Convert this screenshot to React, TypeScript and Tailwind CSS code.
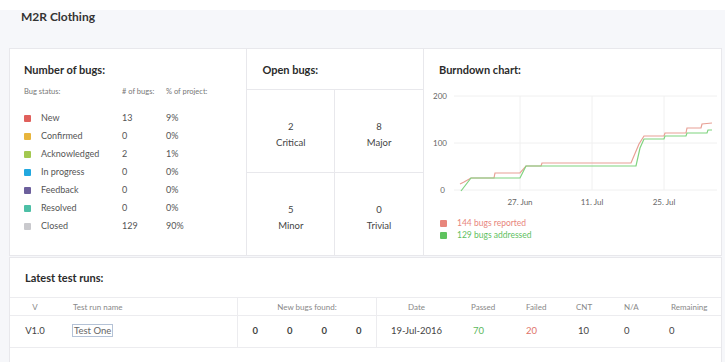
import React from 'react';

const statuses = [
  { name: 'New', color: 'bg-[#e0605c]', count: '13', pct: '9%' },
  { name: 'Confirmed', color: 'bg-[#e8b53c]', count: '0', pct: '0%' },
  { name: 'Acknowledged', color: 'bg-[#a3c850]', count: '2', pct: '1%' },
  { name: 'In progress', color: 'bg-[#22a8df]', count: '0', pct: '0%' },
  { name: 'Feedback', color: 'bg-[#6c5f9c]', count: '0', pct: '0%' },
  { name: 'Resolved', color: 'bg-[#4dbfa6]', count: '0', pct: '0%' },
  { name: 'Closed', color: 'bg-[#c9c9cd]', count: '129', pct: '90%' },
];

const openBugs = [
  { n: '2', label: 'Critical' },
  { n: '8', label: 'Major' },
  { n: '5', label: 'Minor' },
  { n: '0', label: 'Trivial' },
];

const reported =
  '36,98 40,96 47,92 70,92 71,87 96,87 102,80 117,80 118,77 207,77 215,58 220,50 240,50 241,47 262,47 263,42 277,42 278,38 288,37';
const addressed =
  '37,105 47,92 96,92 102,80 212,80 216,62 220,53 240,53 241,50 262,50 263,47 283,47 284,44 288,44';

function Burndown() {
  return (
    <svg width="297" height="125" className="block">
      {[10, 57, 104].map((y) => (
        <line key={y} x1="30" x2="293" y1={y} y2={y} stroke="#f0f0f0" strokeWidth="1" />
      ))}
      {[96, 168, 240].map((x) => (
        <line key={x} x1={x} x2={x} y1="10" y2="104" stroke="#f0f0f0" strokeWidth="1" />
      ))}
      <g fill="#666" fontSize="8" fontFamily="Lato, sans-serif">
        <text x="23" y="13" textAnchor="end">200</text>
        <text x="23" y="60" textAnchor="end">100</text>
        <text x="21" y="107" textAnchor="end">0</text>
        <text x="96" y="119" textAnchor="middle">27. Jun</text>
        <text x="168" y="119" textAnchor="middle">11. Jul</text>
        <text x="240" y="119" textAnchor="middle">25. Jul</text>
      </g>
      <polyline points={reported} fill="none" stroke="#e8a095" strokeWidth="1.2" />
      <polyline points={addressed} fill="none" stroke="#7fd37f" strokeWidth="1.2" />
    </svg>
  );
}

export default function App() {
  return (
    <div className="w-[725px] h-[362px] overflow-hidden bg-[#f6f7fa] font-['Lato',sans-serif] text-[#444]">
      <div className="h-[10px] bg-white" />
      <div className="h-[38px] pl-[21px] pt-[1px] text-[12px] leading-[12px] font-bold text-[#333]">
        M2R Clothing
      </div>

      <div className="ml-[9px] w-[713px] flex bg-white border border-[#e8e8ec] h-[208px]">
        {/* number of bugs */}
        <div className="w-[238px] pt-[15px] px-[14px]">
          <h2 className="text-[11px] leading-[12px] font-bold text-[#2b2b2b]">Number of bugs:</h2>
          <div className="mt-[11px] grid grid-cols-[98px_44px_1fr] text-[7.5px] leading-[10px] text-[#777]">
            <span>Bug status:</span>
            <span># of bugs:</span>
            <span>% of project:</span>
          </div>
          <div className="mt-[12px]">
            {statuses.map((s) => (
              <div key={s.name} className="grid grid-cols-[98px_44px_1fr] h-[18px] items-center text-[9px] text-[#555]">
                <div className="flex items-center">
                  <span className={`w-[7px] h-[7px] rounded-[1px] ${s.color}`} />
                  <span className="ml-[10px]">{s.name}</span>
                </div>
                <span>{s.count}</span>
                <span>{s.pct}</span>
              </div>
            ))}
          </div>
        </div>

        {/* open bugs */}
        <div className="w-[178px] border-l border-[#e8e8ec] flex flex-col">
          <div className="h-[41px] pt-[15px] pl-[15px] border-b border-[#e8e8ec]">
            <h2 className="text-[11px] leading-[12px] font-bold text-[#2b2b2b]">Open bugs:</h2>
          </div>
          <div className="flex-1 grid grid-cols-2 grid-rows-2">
            {openBugs.map((b, i) => (
              <div
                key={b.label}
                className={`flex flex-col items-center justify-center pt-[9px] text-[9.5px] leading-[16px] text-[#444] ${i % 2 === 0 ? 'border-r' : ''} ${i < 2 ? 'border-b' : ''} border-[#e8e8ec]`}
              >
                <span>{b.n}</span>
                <span>{b.label}</span>
              </div>
            ))}
          </div>
        </div>

        {/* burndown */}
        <div className="flex-1 border-l border-[#e8e8ec] pt-[15px]">
          <h2 className="pl-[15px] text-[11px] leading-[12px] font-bold text-[#2b2b2b]">Burndown chart:</h2>
          <div className="mt-[10px]">
            <Burndown />
          </div>
          <div className="mt-[6px] pl-[16px] text-[8.5px] leading-[12px]">
            <div className="flex items-center text-[#e8867c]">
              <span className="w-[7px] h-[7px] rounded-[1px] bg-[#e8867c]" />
              <span className="ml-[10px]">144 bugs reported</span>
            </div>
            <div className="flex items-center text-[#5fbf5f]">
              <span className="w-[7px] h-[7px] rounded-[1px] bg-[#5fc35f]" />
              <span className="ml-[10px]">129 bugs addressed</span>
            </div>
          </div>
        </div>
      </div>

      {/* latest test runs */}
      <div className="ml-[9px] mt-[1px] w-[713px] h-[120px] bg-white border border-[#e8e8ec]">
        <h2 className="pt-[14px] pl-[15px] text-[11px] leading-[12px] font-bold text-[#2b2b2b]">Latest test runs:</h2>
        <div className="mt-[13px] border-t border-[#ececef]">
          <div className="grid grid-cols-[50px_177px_140px_79px_55px_52px_48px_45px_1fr] h-[18px] items-center text-[8px] text-[#888] border-b border-[#ececef]">
            <span className="text-center">V</span>
            <span className="pl-[13px]">Test run name</span>
            <span className="h-full flex items-center justify-center border-x border-[#ececef]">New bugs found:</span>
            <span className="text-center">Date</span>
            <span className="pl-[15px]">Passed</span>
            <span className="pl-[15px]">Failed</span>
            <span className="pl-[13px]">CNT</span>
            <span className="pl-[13px]">N/A</span>
            <span className="pl-[15px]">Remaining</span>
          </div>
          <div className="grid grid-cols-[50px_177px_140px_79px_55px_52px_48px_45px_1fr] h-[32px] items-center text-[9.5px] text-[#444] border-b border-[#ececef]">
            <span className="text-center">V1.0</span>
            <span className="pl-[12px]">
              <span className="border border-[#b4c2d6] px-[1px] text-[#666]">Test One</span>
            </span>
            <span className="h-full grid grid-cols-4 items-center text-center font-bold border-x border-[#ececef]">
              <span>0</span>
              <span>0</span>
              <span>0</span>
              <span>0</span>
            </span>
            <span className="text-center">19-Jul-2016</span>
            <span className="pl-[17px] text-[#5cb85c]">70</span>
            <span className="pl-[15px] text-[#e0746a]">20</span>
            <span className="pl-[15px]">10</span>
            <span className="pl-[13px]">0</span>
            <span className="pl-[13px]">0</span>
          </div>
        </div>
      </div>
    </div>
  );
}
